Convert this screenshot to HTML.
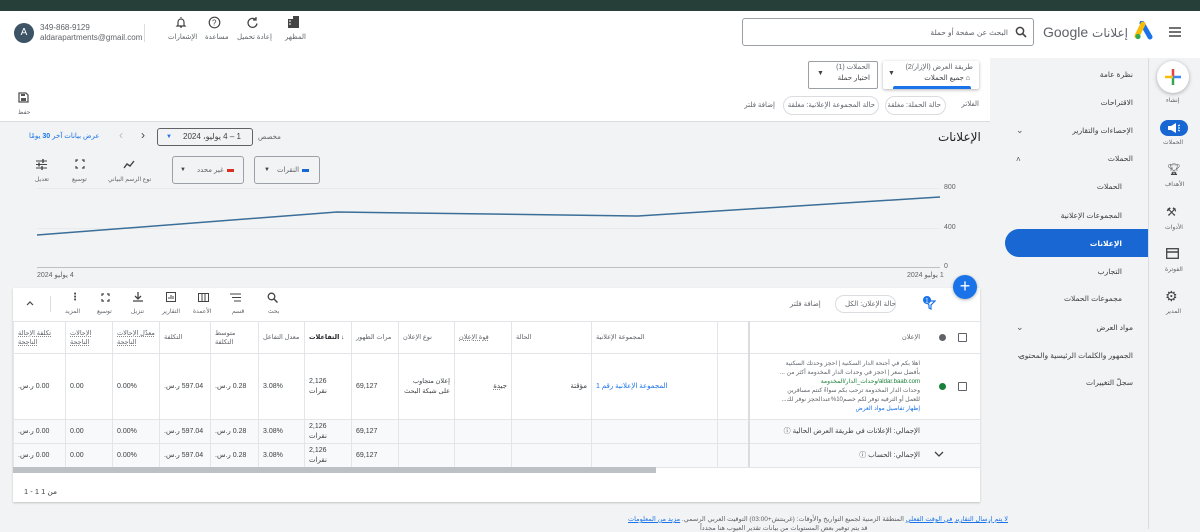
<!DOCTYPE html>
<html><head><meta charset="utf-8"><style>
*{margin:0;padding:0;box-sizing:border-box}
body{width:1200px;height:529px;overflow:hidden;background:#f1f3f4;font-family:"Liberation Sans","DejaVu Sans",sans-serif;color:#3c4043;position:relative;font-size:8px}
.a{position:absolute;white-space:nowrap}
.r{direction:rtl}
.t{position:absolute;white-space:nowrap;direction:rtl;font-size:7px;color:#5f6368}
.line{position:absolute;background:#dadce0}
.ic{position:absolute}
td,th{border:1px solid #e3e5e8;font-weight:normal;vertical-align:middle;padding:0 4px;text-align:left;direction:rtl;font-size:7px;color:#3c4043;white-space:nowrap;overflow:hidden;line-height:10px}
th{color:#5f6368;font-size:6.5px;white-space:normal;line-height:9px}
table{border-collapse:collapse;position:absolute;left:13px;top:321px;table-layout:fixed;width:967px}
.gr td{background:#f8f9fa}
.dot{text-decoration:underline dotted #888}
.ad{text-align:right!important;padding-right:60px!important}
</style></head><body>
<div class="a" style="left:0;top:0;width:1200px;height:11px;background:#263f39"></div>
<div class="a" style="left:0;top:11px;width:1200px;height:47px;background:#fff"></div>
<div class="a" style="left:0;top:58px;width:990px;height:64px;background:#fff"></div>
<div class="line" style="left:0;top:121px;width:990px;height:1px"></div>
<div class="line" style="left:1148px;top:58px;width:1px;height:471px"></div>

<div class="a" style="left:14px;top:23px;width:20px;height:20px;border-radius:50%;background:#3d5366;color:#fff;font-size:10px;text-align:center;line-height:20px">A</div>
<div class="a" style="left:40px;top:23px;font-size:8px;color:#5f6368">349-868-9129</div>
<div class="a" style="left:40px;top:33px;font-size:8px;color:#5f6368">aldarapartments@gmail.com</div>
<div class="line" style="left:144px;top:24px;width:1px;height:18px"></div>
<svg class="ic" style="left:175px;top:16px" width="12" height="13" viewBox="0 0 12 13"><path d="M6 1v1M3 9V6a3 3 0 0 1 6 0v3l1 1H2zM5 11h2" stroke="#444" fill="none" stroke-width="1.2"/></svg>
<div class="t" style="left:168px;top:33px">الإشعارات</div>
<svg class="ic" style="left:208px;top:16px" width="13" height="13"><circle cx="6.5" cy="6.5" r="5.3" stroke="#444" fill="none" stroke-width="1.2"/><text x="4" y="9.5" font-size="8" fill="#444">?</text></svg>
<div class="t" style="left:205px;top:33px">مساعدة</div>
<svg class="ic" style="left:246px;top:16px" width="13" height="13"><path d="M10 4A4.5 4.5 0 1 0 11 7.5M10 1v3H7" stroke="#444" fill="none" stroke-width="1.3"/></svg>
<div class="t" style="left:237px;top:33px">إعادة تحميل</div>
<svg class="ic" style="left:287px;top:15px" width="13" height="14"><path d="M1 4h5v9H1zM6 1h6v12H6z" fill="#444"/><path d="M2 6h2M2 9h2" stroke="#fff"/></svg>
<div class="t" style="left:285px;top:33px">المظهر</div>

<div class="a" style="left:742px;top:18px;width:292px;height:28px;border:1px solid #9aa0a6;border-radius:3px;background:#fff"></div>
<svg class="ic" style="left:1015px;top:26px" width="12" height="12"><circle cx="5" cy="5" r="3.6" stroke="#444" fill="none" stroke-width="1.5"/><path d="M7.6 7.6L11 11" stroke="#444" stroke-width="1.6"/></svg>
<div class="t" style="right:192px;top:28px;font-size:7.5px">البحث عن صفحة أو حملة</div>
<div class="a" style="right:72px;top:24px;font-size:14px;color:#5f6368;direction:ltr">Google <span style="font-family:'DejaVu Sans';font-size:12px">إعلانات</span></div>
<svg class="ic" style="left:1134px;top:21px" width="20" height="20" viewBox="0 0 20 20"><path d="M8 2l8 14" stroke="#1a73e8" stroke-width="5" stroke-linecap="round"/><path d="M9 3L3 15" stroke="#fbbc04" stroke-width="5" stroke-linecap="round"/><circle cx="4" cy="15.5" r="2.6" fill="#34a853"/></svg>
<svg class="ic" style="left:1169px;top:27px" width="12" height="10"><path d="M0 1h12M0 5h12M0 9h12" stroke="#444" stroke-width="1.4"/></svg>

<div class="a" style="left:883px;top:61px;width:96px;height:28px;background:#fff;box-shadow:0 1px 3px rgba(0,0,0,.3);border-radius:2px"></div>
<div class="a" style="left:893px;top:86px;width:78px;height:3px;background:#1a73e8;border-radius:2px 2px 0 0"></div>
<div class="t" style="right:227px;top:63px">طريقة العرض (الإزار/2)</div>
<div class="t" style="right:230px;top:74px;color:#3c4043">⌂ جميع الحملات</div>
<div class="a" style="left:888px;top:70px;font-size:7px;color:#444">▼</div>
<div class="a" style="left:808px;top:61px;width:70px;height:28px;border:1px solid #9aa0a6;border-radius:2px;background:#fff"></div>
<div class="t" style="right:330px;top:63px">الحملات (1)</div>
<div class="t" style="right:330px;top:74px;color:#3c4043">اختيار حملة</div>
<div class="a" style="left:817px;top:70px;font-size:7px;color:#444">▼</div>
<div class="t" style="right:221px;top:100px">الفلاتر</div>
<div class="a" style="left:885px;top:96px;width:61px;height:19px;border:1px solid #dadce0;border-radius:10px"></div>
<div class="t" style="right:259px;top:101px">حالة الحملة: مغلقة</div>
<div class="a" style="left:783px;top:96px;width:96px;height:19px;border:1px solid #dadce0;border-radius:10px"></div>
<div class="t" style="right:325px;top:101px">حالة المجموعة الإعلانية: مغلقة</div>
<div class="t" style="right:425px;top:101px">إضافة فلتر</div>
<svg class="ic" style="left:18px;top:92px" width="11" height="11"><path d="M1 1h7l2 2v7H1z" stroke="#555" fill="none" stroke-width="1.3"/><rect x="3" y="6" width="5" height="3" fill="#555"/><rect x="3" y="2" width="4" height="2" fill="#555"/></svg>
<div class="t" style="left:18px;top:109px;font-size:6px">حفظ</div>

<div class="t" style="left:29px;top:132px;color:#1a73e8">عرض بيانات آخر <b>30</b> يومًا</div>
<div class="a" style="left:119px;top:128px;font-size:12px;color:#bbb">‹</div>
<div class="a" style="left:141px;top:128px;font-size:12px;color:#444">›</div>
<div class="a" style="left:157px;top:128px;width:96px;height:18px;border:1px solid #5f6368;border-radius:3px"></div>
<div class="a" style="left:166px;top:134px;font-size:6px;color:#1a73e8">▼</div>
<div class="a r" style="left:183px;top:132px;font-size:8px;color:#3c4043">1 – 4 يوليو، 2024</div>
<div class="t" style="left:258px;top:133px">مخصص</div>
<div class="a r" style="left:938px;top:130px;font-size:12px;color:#202124">الإعلانات</div>

<div class="a" style="left:172px;top:156px;width:72px;height:28px;border:1px solid #9aa0a6;border-radius:3px"></div>
<div class="a" style="left:180px;top:167px;font-size:6px;color:#444">▼</div>
<div class="t" style="left:197px;top:166px">غير محدد</div>
<div class="a" style="left:227px;top:169px;width:7px;height:3px;background:#d93025"></div>
<div class="a" style="left:254px;top:156px;width:66px;height:28px;border:1px solid #9aa0a6;border-radius:3px"></div>
<div class="a" style="left:264px;top:167px;font-size:6px;color:#444">▼</div>
<div class="t" style="left:277px;top:166px">النقرات</div>
<div class="a" style="left:302px;top:169px;width:7px;height:3px;background:#1967d2"></div>
<svg class="ic" style="left:123px;top:160px" width="12" height="9"><path d="M1 8l3-4 3 2 4-5" stroke="#444" fill="none" stroke-width="1.4"/></svg>
<div class="t" style="left:108px;top:176px;font-size:6px">نوع الرسم البياني</div>
<svg class="ic" style="left:75px;top:159px" width="10" height="10"><path d="M1 3V1h2M7 1h2v2M9 7v2H7M3 9H1V7" stroke="#444" fill="none" stroke-width="1.2"/></svg>
<div class="t" style="left:72px;top:176px;font-size:6px">توسيع</div>
<svg class="ic" style="left:36px;top:159px" width="11" height="11"><path d="M0 2h11M0 5.5h11M0 9h11" stroke="#444" stroke-width="1.1"/><path d="M7 0v4M3 3.5v4M6 7v4" stroke="#444" stroke-width="1.4"/></svg>
<div class="t" style="left:35px;top:176px;font-size:6px">تعديل</div>

<div class="line" style="left:37px;top:188px;width:903px;height:1px;background:#e8eaed"></div>
<div class="line" style="left:37px;top:228px;width:903px;height:1px;background:#e8eaed"></div>
<div class="line" style="left:37px;top:267px;width:903px;height:1px;background:#bdc1c6"></div>
<div class="a" style="left:944px;top:184px;font-size:7px;color:#5f6368">800</div>
<div class="a" style="left:944px;top:224px;font-size:7px;color:#5f6368">400</div>
<div class="a" style="left:944px;top:263px;font-size:7px;color:#5f6368">0</div>
<div class="t" style="left:37px;top:271px">4 يوليو 2024</div>
<div class="t" style="left:907px;top:271px">1 يوليو 2024</div>
<svg class="ic" style="left:0;top:0" width="990" height="280"><polyline points="37,235 337,212 638,216 940,197" stroke="#3b6e98" stroke-width="1.5" fill="none"/></svg>

<div class="a" style="left:13px;top:288px;width:967px;height:214px;background:#fff;box-shadow:0 1px 2px rgba(0,0,0,.2)"></div>
<div class="a" style="left:953px;top:275px;width:24px;height:24px;border-radius:50%;background:#1a73e8;color:#fff;font-size:18px;text-align:center;line-height:23px;box-shadow:0 1px 3px rgba(0,0,0,.3)">+</div>
<svg class="ic" style="left:922px;top:295px" width="14" height="15"><path d="M3 6h10l-4 4v4l-2-1v-3z" stroke="#1a73e8" fill="none" stroke-width="1.2"/><circle cx="5" cy="5" r="4" fill="#1a73e8"/><text x="3.3" y="7.5" font-size="6" fill="#fff">1</text></svg>
<div class="a" style="left:835px;top:295px;width:61px;height:18px;border:1px solid #dadce0;border-radius:10px"></div>
<div class="t" style="left:845px;top:300px">حالة الإعلان: الكل</div>
<div class="t" style="left:790px;top:300px">إضافة فلتر</div>

<svg class="ic" style="left:26px;top:300px" width="8" height="6"><path d="M1 5l3-3 3 3" stroke="#444" fill="none" stroke-width="1.2"/></svg>
<div class="line" style="left:50px;top:296px;width:1px;height:16px"></div>
<div class="a" style="left:70px;top:292px;font-size:10px;color:#444;font-weight:bold">⋮</div><div class="t" style="left:65px;top:308px;font-size:6px">المزيد</div>
<svg class="ic" style="left:101px;top:293px" width="9" height="9"><path d="M1 3V1h2M6 1h2v2M8 6v2H6M3 8H1V6" stroke="#444" fill="none" stroke-width="1.2"/></svg><div class="t" style="left:97px;top:308px;font-size:6px">توسيع</div>
<svg class="ic" style="left:133px;top:292px" width="10" height="10"><path d="M5 0v6M2 4l3 3 3-3M0 9h10" stroke="#444" fill="none" stroke-width="1.3"/></svg><div class="t" style="left:131px;top:308px;font-size:6px">تنزيل</div>
<svg class="ic" style="left:166px;top:292px" width="10" height="10"><rect x=".5" y=".5" width="9" height="9" stroke="#444" fill="none"/><path d="M3 7V5M5 7V3M7 7V4" stroke="#444"/></svg><div class="t" style="left:162px;top:308px;font-size:6px">التقارير</div>
<svg class="ic" style="left:198px;top:293px" width="11" height="9"><rect x=".5" y=".5" width="10" height="8" stroke="#444" fill="none"/><path d="M4 0v9M7 0v9" stroke="#444"/></svg><div class="t" style="left:193px;top:308px;font-size:6px">الأعمدة</div>
<svg class="ic" style="left:230px;top:293px" width="11" height="9"><path d="M0 1h11M2 4.5h9M4 8h7" stroke="#444" stroke-width="1.1"/></svg><div class="t" style="left:232px;top:308px;font-size:6px">قسم</div>
<svg class="ic" style="left:267px;top:292px" width="11" height="11"><circle cx="4.5" cy="4.5" r="3.3" stroke="#444" fill="none" stroke-width="1.3"/><path d="M7 7l3.5 3.5" stroke="#444" stroke-width="1.5"/></svg><div class="t" style="left:268px;top:308px;font-size:6px">بحث</div>

<table>
<colgroup><col style="width:52px"><col style="width:47px"><col style="width:47px"><col style="width:51px"><col style="width:48px"><col style="width:46px"><col style="width:47px"><col style="width:47px"><col style="width:56px"><col style="width:57px"><col style="width:80px"><col style="width:126px"><col style="width:31px"><col style="width:232px"></colgroup>
<tr style="height:32px"><th class="dot">تكلفة الإحالة الناجحة</th><th class="dot">الإحالات الناجحة</th><th class="dot">معدّل الإحالات الناجحة</th><th>التكلفة</th><th>متوسط التكلفة</th><th>معدل التفاعل</th><th style="color:#202124;font-weight:bold">↓ التفاعلات</th><th>مرات الظهور</th><th>نوع الإعلان</th><th class="dot">قوة الإعلان</th><th>الحالة</th><th>المجموعة الإعلانية</th><th></th><th class="ad">الإعلان</th></tr>
<tr style="height:66px"><td>0.00 ر.س.</td><td>0.00</td><td>0.00%</td><td>597.04 ر.س.</td><td>0.28 ر.س.</td><td>3.08%</td><td>2,126<br>نقرات</td><td>69,127</td><td style="text-align:right;font-size:6.5px">إعلان متجاوب<br>على شبكة البحث</td><td style="text-align:right" class="dot">جيدة</td><td style="text-align:right">مؤقتة</td><td style="text-align:left;color:#1a73e8">المجموعة الإعلانية رقم 1</td><td></td><td class="ad" style="font-size:6px;line-height:9px;color:#5f6368">اهلا بكم في أجنحة الدار السكنية | احجز وحدتك السكنية<br>بأفضل سعر | احجز في وحدات الدار المخدومة أكثر من ...<br><span style="color:#188038">aldar.baab.com/وحدات_الدار/المخدومة</span><br>وحدات الدار المخدومة ترحب بكم سواءً كنتم مسافرين<br>للعمل أو الترفيه توفر لكم خصم10%عندالحجز نوفر لك...<br><span style="color:#1a73e8">إظهار تفاصيل مواد العرض</span></td></tr>
<tr class="gr" style="height:24px"><td>0.00 ر.س.</td><td>0.00</td><td>0.00%</td><td>597.04 ر.س.</td><td>0.28 ر.س.</td><td>3.08%</td><td>2,126<br>نقرات</td><td>69,127</td><td></td><td></td><td></td><td></td><td></td><td class="ad">الإجمالي: الإعلانات في طريقة العرض الحالية ⓘ</td></tr>
<tr class="gr" style="height:24px"><td>0.00 ر.س.</td><td>0.00</td><td>0.00%</td><td>597.04 ر.س.</td><td>0.28 ر.س.</td><td>3.08%</td><td>2,126<br>نقرات</td><td>69,127</td><td></td><td></td><td></td><td></td><td></td><td class="ad">الإجمالي: الحساب ⓘ</td></tr>
</table>
<div class="a" style="left:958px;top:333px;width:9px;height:9px;border:1px solid #5f6368;border-radius:1px;background:#fff"></div>
<div class="a" style="left:939px;top:334px;width:7px;height:7px;border-radius:50%;background:#5f6368"></div>
<div class="a" style="left:958px;top:382px;width:9px;height:9px;border:1px solid #5f6368;border-radius:1px;background:#fff"></div>
<div class="a" style="left:939px;top:383px;width:7px;height:7px;border-radius:50%;background:#188038"></div>
<svg class="ic" style="left:934px;top:451px" width="10" height="7"><path d="M1 1l4 4 4-4" stroke="#444" fill="none" stroke-width="1.3"/></svg>
<div class="line" style="left:748px;top:321px;width:2px;height:146px;background:#dadce0"></div>
<div class="a" style="left:13px;top:467px;width:643px;height:6px;background:#bdc1c6"></div>
<div class="a" style="left:24px;top:487px;font-size:7.5px;color:#3c4043">1 - 1 من 1</div>

<div class="a r" style="left:628px;top:515px;font-size:6.5px;color:#5f6368"><u style="color:#1a73e8">لا يتم إرسال التقارير في الوقت الفعلي</u> المنطقة الزمنية لجميع التواريخ والأوقات: (غرينتش+03:00) التوقيت العربي الرسمي. <u style="color:#1a73e8">مزيد من المعلومات</u></div>
<div class="a r" style="left:700px;top:524px;font-size:6.5px;color:#5f6368">قد يتم توفير بعض المستويات من بيانات تقدير العيوب هنا مجدداً</div>

<div class="a" style="left:1005px;top:229px;width:143px;height:28px;background:#1967d2;border-radius:14px 0 0 14px"></div>
<div class="t r" style="right:67px;top:70px;font-size:7.5px;color:#3c4043">نظرة عامة</div>
<div class="t" style="right:67px;top:98px;font-size:7.5px;color:#3c4043">الاقتراحات</div>
<div class="t" style="right:67px;top:126px;font-size:7.5px;color:#3c4043">الإحصاءات والتقارير</div>
<div class="t" style="right:67px;top:154px;font-size:7.5px;color:#3c4043">الحملات</div>
<div class="t" style="right:78px;top:182px;font-size:7.5px;color:#3c4043">الحملات</div>
<div class="t" style="right:78px;top:211px;font-size:7.5px;color:#3c4043">المجموعات الإعلانية</div>
<div class="t" style="right:78px;top:239px;font-size:7.5px;color:#fff;font-weight:bold">الإعلانات</div>
<div class="t" style="right:78px;top:267px;font-size:7.5px;color:#3c4043">التجارب</div>
<div class="t" style="right:78px;top:294px;font-size:7.5px;color:#3c4043">مجموعات الحملات</div>
<div class="t" style="right:67px;top:323px;font-size:7.5px;color:#3c4043">مواد العرض</div>
<div class="t" style="right:67px;top:351px;font-size:7.5px;color:#3c4043">الجمهور والكلمات الرئيسية والمحتوى</div>
<div class="t" style="right:67px;top:378px;font-size:7.5px;color:#3c4043">سجلّ التغييرات</div>
<div class="a" style="left:1016px;top:125px;font-size:9px;color:#555">⌄</div>
<div class="a" style="left:1016px;top:155px;font-size:8px;color:#555">˄</div>
<div class="a" style="left:1016px;top:322px;font-size:9px;color:#555">⌄</div>
<div class="a" style="left:1016px;top:350px;font-size:9px;color:#555">⌄</div>

<div class="a" style="left:1157px;top:61px;width:32px;height:32px;border-radius:50%;background:#fff;box-shadow:0 1px 4px rgba(0,0,0,.3)"></div>
<svg class="ic" style="left:1164px;top:68px" width="18" height="18"><path d="M9 1v8" stroke="#ea4335" stroke-width="2.5"/><path d="M9 9v8" stroke="#34a853" stroke-width="2.5"/><path d="M1 9h8" stroke="#fbbc04" stroke-width="2.5"/><path d="M9 9h8" stroke="#4285f4" stroke-width="2.5"/></svg>
<div class="t" style="left:1166px;top:97px;font-size:6px">إنشاء</div>
<div class="a" style="left:1160px;top:120px;width:28px;height:16px;border-radius:8px;background:#1967d2"></div>
<svg class="ic" style="left:1167px;top:123px" width="13" height="10"><path d="M1 3h3l5-3v10L4 7H1z" fill="#fff"/><path d="M11 3l2-1M11 5h2M11 7l2 1" stroke="#fff"/></svg>
<div class="t" style="left:1163px;top:139px;font-size:6px">الحملات</div>
<div class="a" style="left:1167px;top:163px;font-size:11px;color:#444">🏆︎</div>
<div class="t" style="left:1165px;top:181px;font-size:6px">الأهداف</div>
<div class="a" style="left:1166px;top:205px;font-size:12px;color:#444">⚒︎</div>
<div class="t" style="left:1165px;top:224px;font-size:6px">الأدوات</div>
<svg class="ic" style="left:1166px;top:248px" width="13" height="11"><rect x=".7" y=".7" width="11.6" height="9.6" stroke="#444" fill="none" stroke-width="1.3"/><path d="M1 4h11" stroke="#444" stroke-width="1.5"/></svg>
<div class="t" style="left:1165px;top:266px;font-size:6px">الفوترة</div>
<div class="a" style="left:1165px;top:288px;font-size:14px;color:#444">⚙︎</div>
<div class="t" style="left:1166px;top:308px;font-size:6px">المدير</div>
</body></html>
